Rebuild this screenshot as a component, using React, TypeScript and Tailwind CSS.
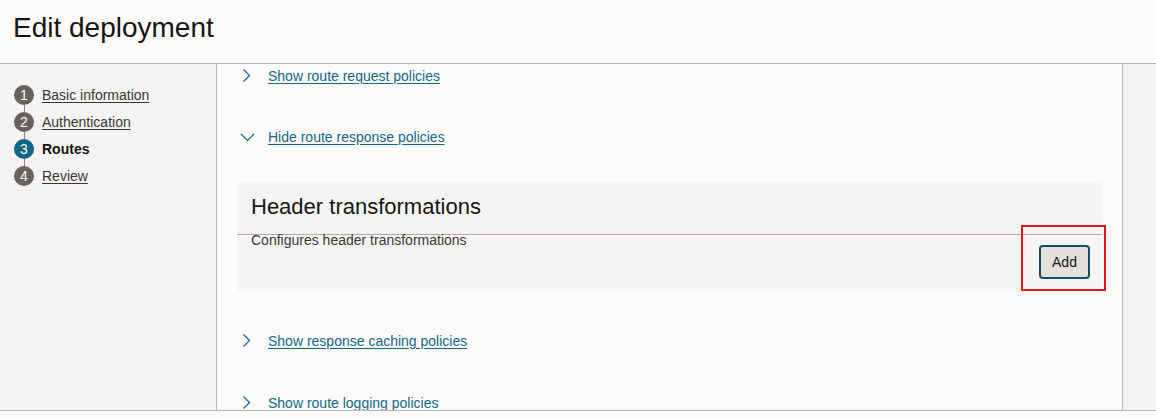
const steps = [
  { n: 1, label: "Basic information" },
  { n: 2, label: "Authentication" },
  { n: 3, label: "Routes", active: true },
  { n: 4, label: "Review" },
];

function Chevron({ open }: { open?: boolean }) {
  return (
    <svg width="16" height="16" viewBox="0 0 16 16" className="shrink-0">
      {open ? (
        <polyline points="1,5 7.5,11.5 14,5" fill="none" stroke="#0f6a8a" strokeWidth="1.2" />
      ) : (
        <polyline points="3.5,1.5 9.5,7.5 3.5,13.5" fill="none" stroke="#0f6a8a" strokeWidth="1.2" />
      )}
    </svg>
  );
}

function PolicyLink({ text, open, className }: { text: string; open?: boolean; className?: string }) {
  return (
    <div className={`flex h-5 items-center gap-3 pl-[3px] ${className ?? ""}`}>
      <Chevron open={open} />
      <a href="#" className="text-[14px] leading-5 text-[#0f6a8a] underline underline-offset-2">
        {text}
      </a>
    </div>
  );
}

export default function App() {
  return (
    <div
      className="flex h-[418px] w-full flex-col overflow-hidden bg-[#fcfbfa]"
      style={{ fontFamily: '"Liberation Sans", Arial, sans-serif' }}
    >
      {/* Header */}
      <div className="h-[64px] shrink-0 border-b border-[#b9b5b0] pl-[13px] pt-[12px]">
        <h1 className="text-[28px] leading-[32px] text-[#161513]">Edit deployment</h1>
      </div>

      <div className="flex h-[347px] shrink-0 border-b border-[#b9b5b0]">
        {/* Steps */}
        <div className="w-[217px] shrink-0 border-r border-[#b9b5b0] bg-[#f5f4f2] pl-[14px] pt-[21px]">
          {steps.map((s, i) => (
            <div key={s.n} className="flex h-[27px] items-start gap-2">
              <div className="flex h-full w-5 flex-col items-center">
                <div
                  className={`flex h-5 w-5 items-center justify-center rounded-full text-[14px] text-white ${
                    s.active ? "bg-[#0f6586]" : "bg-[#68615c]"
                  }`}
                >
                  {s.n}
                </div>
                {i < steps.length - 1 && <div className="w-px flex-1 bg-[#8d8782]" />}
              </div>
              {s.active ? (
                <span className="text-[14px] font-bold leading-5 text-[#161513]">{s.label}</span>
              ) : (
                <a href="#" className="text-[14px] leading-5 text-[#3c3835] underline underline-offset-2">
                  {s.label}
                </a>
              )}
            </div>
          ))}
        </div>

        {/* Main */}
        <div className="flex flex-1 flex-col overflow-hidden px-[20px] pt-[2px]">
          <PolicyLink text="Show route request policies" />
          <PolicyLink text="Hide route response policies" open className="mt-[41px]" />

          <div className="relative mt-[35px] shrink-0 rounded-[3px] bg-[#f6f5f4]">
            <div className="h-[53px] border-b border-[#b0aba6] pl-[14px] pt-[11px]">
              <h2 className="text-[22px] leading-[28px] text-[#161513]">Header transformations</h2>
            </div>
            <div className="flex items-start justify-between pb-[12px] pl-[14px] pr-[12px]">
              <p className="-mt-[3px] text-[14px] leading-4 text-[#3c3835]">Configures header transformations</p>
              <button className="mt-[10px] h-[34px] w-[51px] rounded-[4px] border-2 border-[#0d4e67] bg-[#e4e1dc] text-[14px] text-[#161513]">
                Add
              </button>
            </div>
            <div className="pointer-events-none absolute bottom-0 right-[-4px] h-[66px] w-[85px] border-2 border-[#e3141b]" />
          </div>

          <PolicyLink text="Show response caching policies" className="mt-[40px]" />
          <PolicyLink text="Show route logging policies" className="mt-[42px]" />
        </div>

        {/* Right rail */}
        <div className="w-[34px] shrink-0 border-l border-[#b9b5b0] bg-[#f5f4f2]" />
      </div>
      <div className="flex-1 bg-[#fcfbfa]" />
    </div>
  );
}
